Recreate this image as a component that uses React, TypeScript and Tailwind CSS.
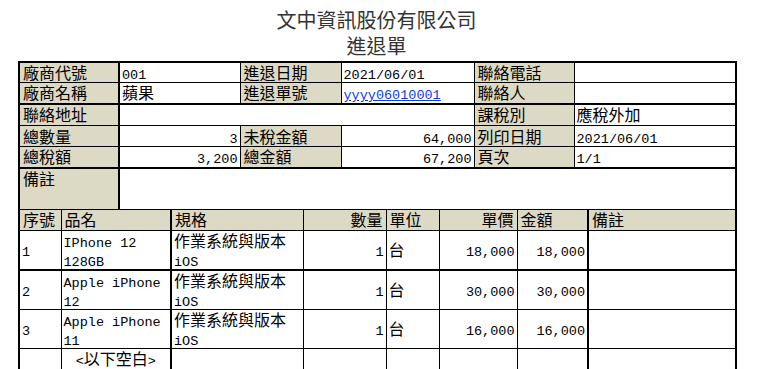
import React from 'react';

// 進退單 print preview: title block, header info grid, item detail grid.
const BEIGE = 'bg-[#dcd9c5]';
const mono = "font-['Liberation_Mono','Noto_Sans_CJK_TC',monospace] text-[13.5px] leading-[10px]";

function L({ children }: { children: React.ReactNode }) {
  return <span className={mono}>{children}</span>;
}

function Lbl({ children, className = '' }: { children?: React.ReactNode; className?: string }) {
  return <td className={`border border-black ${BEIGE} px-[3px] py-0 align-middle ${className}`}>{children}</td>;
}

function Val({ children, className = '', colSpan }: { children?: React.ReactNode; className?: string; colSpan?: number }) {
  return (
    <td colSpan={colSpan} className={`border border-black bg-white px-[2px] py-0 align-middle ${className}`}>
      {children}
    </td>
  );
}

const items = [
  { no: '1', name: ['IPhone 12', '128GB'], spec: '作業系統與版本', os: 'iOS', qty: '1', unit: '台', price: '18,000', amount: '18,000' },
  { no: '2', name: ['Apple iPhone', '12'], spec: '作業系統與版本', os: 'iOS', qty: '1', unit: '台', price: '30,000', amount: '30,000' },
  { no: '3', name: ['Apple iPhone', '11'], spec: '作業系統與版本', os: 'iOS', qty: '1', unit: '台', price: '16,000', amount: '16,000' },
];

export default function App() {
  return (
    <div className="h-[369px] w-[770px] bg-white font-['Noto_Sans_CJK_TC','Noto_Sans_CJK_JP',sans-serif] text-[16px] leading-[19px] text-black">
      <div className="ml-[18px] w-[717px] pt-[7px]">
        <div className="text-center text-[20px] leading-[26px] text-[#333]">文中資訊股份有限公司</div>
        <div className="mb-[2px] text-center text-[20px] leading-[26px] text-[#333]">進退單</div>

        {/* header info */}
        <table className="w-[717px] table-fixed border-collapse border-2 border-b-0 border-black">
          <colgroup>
            <col className="w-[100px]" />
            <col className="w-[121px]" />
            <col className="w-[101px]" />
            <col className="w-[133px]" />
            <col className="w-[100px]" />
            <col className="w-[162px]" />
          </colgroup>
          <tbody>
            <tr className="h-[20px]">
              <Lbl className="border-r-2">廠商代號</Lbl>
              <Val><L>001</L></Val>
              <Lbl>進退日期</Lbl>
              <Val><L>2021/06/01</L></Val>
              <Lbl>聯絡電話</Lbl>
              <Val />
            </tr>
            <tr className="h-[21px]">
              <Lbl className="border-r-2 border-b-2">廠商名稱</Lbl>
              <Val className="border-b-2">蘋果</Val>
              <Lbl className="border-b-2">進退單號</Lbl>
              <Val className="border-b-2">
                <a href="#" className={`${mono} text-[#0b3ee0] underline`}>yyyy06010001</a>
              </Val>
              <Lbl className="border-b-2">聯絡人</Lbl>
              <Val className="border-b-2" />
            </tr>
            <tr className="h-[22px]">
              <Lbl className="border-r-2">聯絡地址</Lbl>
              <Val colSpan={3} />
              <Lbl>課稅別</Lbl>
              <Val>應稅外加</Val>
            </tr>
            <tr className="h-[21px]">
              <Lbl className="border-r-2">總數量</Lbl>
              <Val className="text-right"><L>3</L></Val>
              <Lbl>未稅金額</Lbl>
              <Val className="text-right"><L>64,000</L></Val>
              <Lbl>列印日期</Lbl>
              <Val><L>2021/06/01</L></Val>
            </tr>
            <tr className="h-[21px]">
              <Lbl className="border-r-2 border-b-2">總稅額</Lbl>
              <Val className="border-b-2 text-right"><L>3,200</L></Val>
              <Lbl className="border-b-2">總金額</Lbl>
              <Val className="border-b-2 text-right"><L>67,200</L></Val>
              <Lbl className="border-b-2">頁次</Lbl>
              <Val className="border-b-2"><L>1/1</L></Val>
            </tr>
            <tr className="h-[42px]">
              <Lbl className="border-r-2 align-top">備註</Lbl>
              <Val colSpan={5} />
            </tr>
          </tbody>
        </table>

        {/* item detail */}
        <table className="w-[717px] table-fixed border-collapse border-2 border-t-0 border-black">
          <colgroup>
            <col className="w-[42px]" />
            <col className="w-[110px]" />
            <col className="w-[132px]" />
            <col className="w-[83px]" />
            <col className="w-[53px]" />
            <col className="w-[78px]" />
            <col className="w-[71px]" />
            <col className="w-[148px]" />
          </colgroup>
          <tbody>
            <tr className="h-[20px]">
              <Lbl className="border-t-0">序號</Lbl>
              <Lbl className="border-t-0 border-r-2">品名</Lbl>
              <Lbl className="border-t-0">規格</Lbl>
              <Lbl className="border-t-0 text-right">數量</Lbl>
              <Lbl className="border-t-0">單位</Lbl>
              <Lbl className="border-t-0 text-right">單價</Lbl>
              <Lbl className="border-t-0 border-r-2">金額</Lbl>
              <Lbl className="border-t-0">備註</Lbl>
            </tr>
            {items.map((it, i) => {
              const b = i === 0 ? 'border-b-2' : '';
              return (
                <tr key={it.no} className="h-[39px]">
                  <Val className={b}><L>{it.no}</L></Val>
                  <Val className={`${b} border-r-2`}>
                    <div><L>{it.name[0]}</L></div>
                    <div><L>{it.name[1]}</L></div>
                  </Val>
                  <Val className={b}>
                    <div>{it.spec}</div>
                    <div><L>{it.os}</L></div>
                  </Val>
                  <Val className={`${b} text-right`}><L>{it.qty}</L></Val>
                  <Val className={b}>{it.unit}</Val>
                  <Val className={`${b} text-right`}><L>{it.price}</L></Val>
                  <Val className={`${b} border-r-2 text-right`}><L>{it.amount}</L></Val>
                  <Val className={b} />
                </tr>
              );
            })}
            <tr className="h-[22px]">
              <Val />
              <Val className="border-r-2 text-center">
                <L>&lt;</L>以下空白<L>&gt;</L>
              </Val>
              <Val />
              <Val />
              <Val />
              <Val />
              <Val className="border-r-2" />
              <Val />
            </tr>
          </tbody>
        </table>
      </div>
    </div>
  );
}
